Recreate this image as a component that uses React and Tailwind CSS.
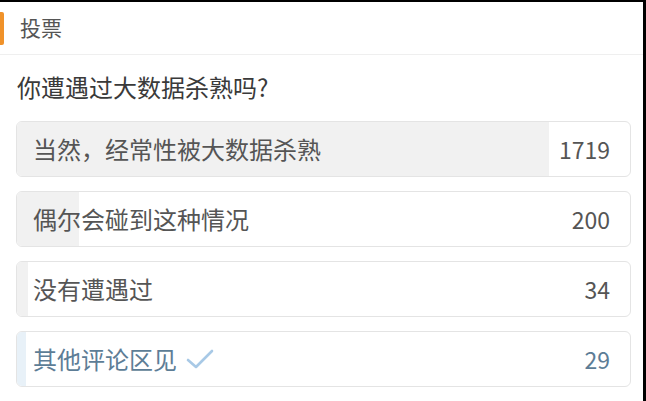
import React from 'react'

const options = [
  { label: '当然，经常性被大数据杀熟', count: 1719 },
  { label: '偶尔会碰到这种情况', count: 200 },
  { label: '没有遭遇过', count: 34 },
  { label: '其他评论区见', count: 29, voted: true },
]

const total = options.reduce((s, o) => s + o.count, 0)

const Check = () => (
  <svg width="28" height="20" viewBox="0 0 28 20" className="ml-[9px]">
    <path d="M2 11 L10 18 L26 2" fill="none" stroke="#a8c9e6" strokeWidth="2.6" strokeLinecap="round" strokeLinejoin="round" />
  </svg>
)

const OptionRow = ({ label, count, voted }) => (
  <div className="relative h-[56px] rounded-[6px] border border-[#e4e4e4] overflow-hidden">
    {/* Fill bar */}
    <div
      className={`absolute left-0 top-0 bottom-0 ${voted ? 'bg-[#e8f1f8]' : 'bg-[#f1f1f1]'}`}
      style={{ width: `${(count / total) * 100}%` }}
    />
    <div className="relative flex items-center justify-between h-full pl-[16px] pr-[20px]">
      <div className={`flex items-center text-[24px] ${voted ? 'text-[#5d7d96]' : 'text-[#555]'}`}>
        {label}
        {voted && <Check />}
      </div>
      <span className={`text-[23px] ${voted ? 'text-[#5d7d96]' : 'text-[#555]'}`}>{count}</span>
    </div>
  </div>
)

export default function App() {
  return (
    <div
      className="w-[646px] h-[401px] bg-white border-t-2 border-r-[3px] border-black overflow-hidden"
      style={{ fontFamily: '"Noto Sans CJK SC", "Noto Sans", sans-serif' }}
    >
      {/* Header */}
      <div className="h-[53px] flex items-center border-b border-[#efefef]">
        <div className="w-[4px] h-[33px] bg-[#f0922a] rounded-r-[2px]" />
        <span className="ml-[16px] text-[21px] text-[#555]">投票</span>
      </div>

      {/* Question */}
      <div className="pt-[17px] pl-[17px] text-[24px] leading-[30px] text-[#3a3a3a]">你遭遇过大数据杀熟吗?</div>

      {/* Options */}
      <div className="mt-[19px] ml-[16px] w-[615px] flex flex-col gap-[14px]">
        {options.map((o) => (
          <OptionRow key={o.label} {...o} />
        ))}
      </div>
    </div>
  )
}
